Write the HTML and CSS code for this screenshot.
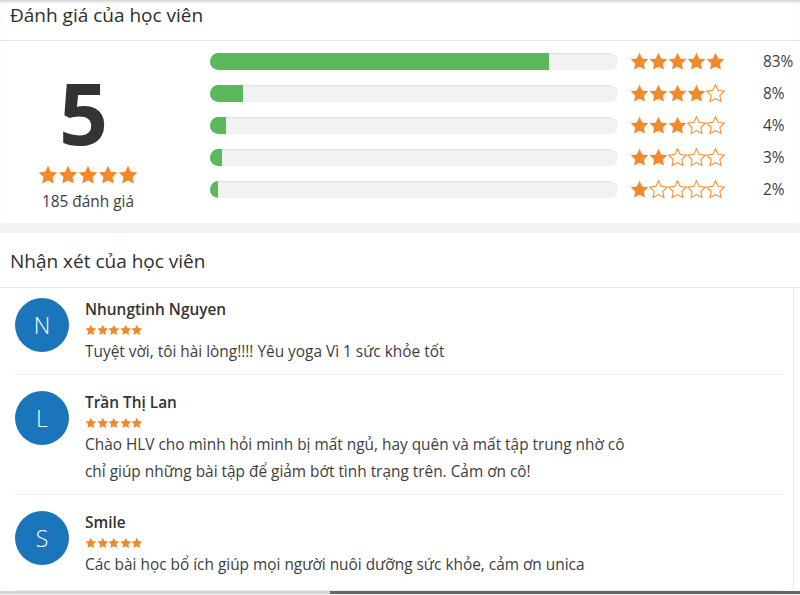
FILE: index.html
```html
<!DOCTYPE html>
<html lang="vi">
<head>
    <meta charset="UTF-8">
    <meta name="viewport" content="width=device-width, initial-scale=1.0">
    <title>Đánh giá của học viên</title>
    <link rel="stylesheet" href="styles.css">
</head>
<body>
    <svg class="defs" width="0" height="0">
        <symbol id="star" viewBox="0 0 20 20">
            <polygon points="10,0.8 12.82,6.72 19.32,7.57 14.56,12.08 15.76,18.53 10,15.4 4.24,18.53 5.44,12.08 0.68,7.57 7.18,6.72"/>
        </symbol>
    </svg>

    <section class="panel summary-panel">
        <h3 class="panel-title">Đánh giá của học viên</h3>
        <div class="summary">
            <div class="score">
                <div class="score-num">5</div>
                <div class="stars stars-md" data-rating="5"></div>
                <div class="score-count">185 đánh giá</div>
            </div>
            <div class="bars">
                <div class="bar-row">
                    <div class="bar"><div class="bar-fill" style="width: 83%"></div></div>
                    <div class="stars stars-lg" data-rating="5"></div>
                    <span class="pct">83%</span>
                </div>
                <div class="bar-row">
                    <div class="bar"><div class="bar-fill" style="width: 8%"></div></div>
                    <div class="stars stars-lg" data-rating="4"></div>
                    <span class="pct">8%</span>
                </div>
                <div class="bar-row">
                    <div class="bar"><div class="bar-fill" style="width: 4%"></div></div>
                    <div class="stars stars-lg" data-rating="3"></div>
                    <span class="pct">4%</span>
                </div>
                <div class="bar-row">
                    <div class="bar"><div class="bar-fill" style="width: 3%"></div></div>
                    <div class="stars stars-lg" data-rating="2"></div>
                    <span class="pct">3%</span>
                </div>
                <div class="bar-row">
                    <div class="bar"><div class="bar-fill" style="width: 2%"></div></div>
                    <div class="stars stars-lg" data-rating="1"></div>
                    <span class="pct">2%</span>
                </div>
            </div>
        </div>
    </section>

    <section class="panel reviews-panel">
        <h3 class="panel-title">Nhận xét của học viên</h3>
        <div class="review-list">
            <div class="review">
                <div class="avatar">N</div>
                <div class="review-body">
                    <div class="review-name">Nhungtinh Nguyen</div>
                    <div class="stars stars-sm" data-rating="5"></div>
                    <p class="review-text">Tuyệt vời, tôi hài lòng!!!! Yêu yoga Vì 1 sức khỏe tốt</p>
                </div>
            </div>
            <div class="review">
                <div class="avatar">L</div>
                <div class="review-body">
                    <div class="review-name">Trần Thị Lan</div>
                    <div class="stars stars-sm" data-rating="5"></div>
                    <p class="review-text">Chào HLV cho mình hỏi mình bị mất ngủ, hay quên và mất tập trung nhờ cô chỉ giúp những bài tập để giảm bớt tình trạng trên. Cảm ơn cô!</p>
                </div>
            </div>
            <div class="review">
                <div class="avatar">S</div>
                <div class="review-body">
                    <div class="review-name">Smile</div>
                    <div class="stars stars-sm" data-rating="5"></div>
                    <p class="review-text">Các bài học bổ ích giúp mọi người nuôi dưỡng sức khỏe, cảm ơn unica</p>
                </div>
            </div>
        </div>
    </section>
    <div class="page-edge"></div>

    <script>
        // render star rows from data-rating
        document.querySelectorAll('.stars').forEach(el => {
            const rating = parseInt(el.dataset.rating, 10);
            let html = '';
            for (let i = 1; i <= 5; i++) {
                const cls = i <= rating ? 'star star-full' : 'star star-empty';
                html += `<svg class="${cls}"><use href="#star"/></svg>`;
            }
            el.innerHTML = html;
        });
    </script>
</body>
</html>
```

FILE: styles.css
```css
:root {
    --text: #333;
    --muted: #3d3d3d;
    --line: #e6e6e6;
    --star: #f28a2a;
    --green: #5cb85c;
}

* {
    box-sizing: border-box;
    margin: 0;
    padding: 0;
}

body {
    font-family: 'Open Sans', 'Noto Sans', sans-serif;
    color: var(--text);
    background: #f2f2f2;
    width: 800px;
}

.defs {
    position: absolute;
}

.panel {
    background: #fff;
}

.panel-title {
    font-size: 19px;
    font-weight: 400;
    line-height: 26px;
    color: #2e2e2e;
    border-bottom: 1px solid var(--line);
}

.summary-panel {
    box-shadow: inset 0 4px 4px -3px rgba(0, 0, 0, 0.25);
}

.summary-panel .panel-title {
    padding: 2px 10px 12px;
}

.summary {
    display: flex;
    height: 182px;
    padding-top: 4px;
    margin-bottom: 10px;
}

/* left: average score */
.score {
    width: 176px;
    text-align: center;
    padding-top: 22px;
}

.score-num {
    font-size: 86px;
    font-weight: 700;
    line-height: 90px;
    color: #333;
    padding-right: 9px;
}

.score-count {
    font-size: 15.4px;
    color: var(--muted);
    margin-top: 6px;
}

/* right: distribution bars */
.bars {
    margin-left: 34px;
}

.bar-row {
    display: flex;
    align-items: center;
    height: 32px;
}

.bar {
    width: 408px;
    height: 17px;
    border-radius: 9px;
    background: #f2f2f2;
    box-shadow: inset 0 1px 2px rgba(0, 0, 0, 0.08);
    overflow: hidden;
}

.bar-fill {
    height: 100%;
    background: var(--green);
}

.bar-row .stars {
    margin-left: 12px;
}

.pct {
    margin-left: 38px;
    font-size: 15.4px;
    color: var(--muted);
}

/* stars */
.stars {
    display: flex;
    line-height: 0;
}

.score .stars {
    justify-content: center;
    margin-top: 8px;
}

.star {
    display: block;
}

.star-full {
    fill: var(--star);
}

.star-empty {
    fill: none;
    stroke: var(--star);
    stroke-width: 1.1;
}

.stars-lg .star {
    width: 19px;
    height: 19px;
}

.stars-md .star {
    width: 20px;
    height: 20px;
}

.stars-sm {
    height: 16px;
    align-items: center;
}

.stars-sm .star {
    width: 11.6px;
    height: 12px;
}

/* reviews */
.reviews-panel .panel-title {
    padding: 15px 10px 13px;
}

.review-list {
    width: 794px;
    border-right: 1px solid #ececec;
}

.review {
    display: flex;
    margin: 0 10px 0 15px;
    padding: 16px 0 9px;
    border-bottom: 1px solid #eee;
}

.review:first-child {
    padding-top: 10px;
}

.review:last-child {
    padding-bottom: 12px;
}

.avatar {
    flex: none;
    width: 54px;
    height: 54px;
    border-radius: 50%;
    background: #1b75bb;
    color: #fff;
    font-size: 23px;
    font-weight: 300;
    display: flex;
    align-items: center;
    justify-content: center;
    margin-right: 16px;
}

.review-name {
    font-size: 15.4px;
    font-weight: 600;
    line-height: 24px;
    color: var(--text);
}

.review-text {
    font-size: 15.4px;
    line-height: 27px;
    color: var(--muted);
    max-width: 545px;
}

.page-edge {
    height: 3px;
    background: linear-gradient(to right, #d6d6d6 0, #d6d6d6 330px, #666 330px);
}
```
